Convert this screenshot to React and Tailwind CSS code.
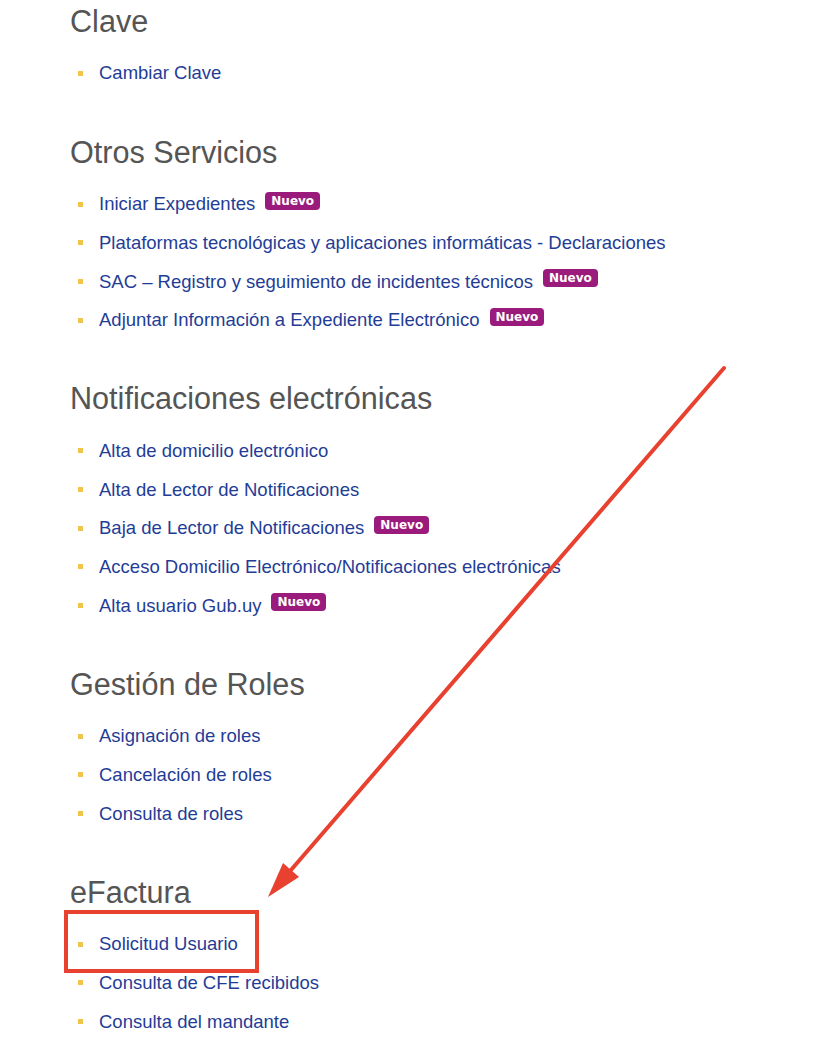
import React from 'react';

const sections = [
  { title: 'Clave', items: [{ label: 'Cambiar Clave' }] },
  {
    title: 'Otros Servicios',
    items: [
      { label: 'Iniciar Expedientes', isNew: true },
      { label: 'Plataformas tecnológicas y aplicaciones informáticas - Declaraciones' },
      { label: 'SAC – Registro y seguimiento de incidentes técnicos', isNew: true },
      { label: 'Adjuntar Información a Expediente Electrónico', isNew: true },
    ],
  },
  {
    title: 'Notificaciones electrónicas',
    items: [
      { label: 'Alta de domicilio electrónico' },
      { label: 'Alta de Lector de Notificaciones' },
      { label: 'Baja de Lector de Notificaciones', isNew: true },
      { label: 'Acceso Domicilio Electrónico/Notificaciones electrónicas' },
      { label: 'Alta usuario Gub.uy', isNew: true },
    ],
  },
  {
    title: 'Gestión de Roles',
    items: [
      { label: 'Asignación de roles' },
      { label: 'Cancelación de roles' },
      { label: 'Consulta de roles' },
    ],
  },
  {
    title: 'eFactura',
    items: [
      { label: 'Solicitud Usuario' },
      { label: 'Consulta de CFE recibidos' },
      { label: 'Consulta del mandante' },
    ],
  },
];

const NewBadge = () => (
  <span className="ml-[10px] mb-[7px] inline-flex h-[18px] items-center rounded-[4px] bg-[#9b1b7c] px-[6px] text-[12px] font-bold leading-none text-white font-['DejaVu_Sans',sans-serif]">
    Nuevo
  </span>
);

const App = () => {
  return (
    <div className="relative h-[1048px] w-[831px] overflow-hidden bg-white font-['Liberation_Sans',Arial,sans-serif]">
      <div className="flex flex-col gap-[41px] pl-[70px] pt-[3px]">
        {sections.map((section) => (
          <div key={section.title}>
            <h2 className="h-[36px] text-[30.6px] leading-[36px] text-[#555555]">{section.title}</h2>
            <ul className="mt-[15px]">
              {section.items.map((item) => (
                <li key={item.label} className="flex h-[38.7px] items-center">
                  <span className="ml-[8px] h-[5px] w-[5px] bg-[#f0c54a]" />
                  <a href="#" className="ml-[16px] text-[18.5px] text-[#1f3d96]">
                    {item.label}
                  </a>
                  {item.isNew && <NewBadge />}
                </li>
              ))}
            </ul>
          </div>
        ))}
      </div>

      {/* annotation: highlight box */}
      <div className="absolute left-[64px] top-[910px] h-[63px] w-[195px] border-[4px] border-[#e8412f]" />

      {/* annotation: arrow */}
      <svg className="pointer-events-none absolute left-0 top-0" width="831" height="1048">
        <line x1="724" y1="368" x2="291" y2="870" stroke="#e8412f" strokeWidth="4" strokeLinecap="round" />
        <polygon points="268,897 299,877 283,863" fill="#e8412f" />
      </svg>
    </div>
  );
};

export default App;
